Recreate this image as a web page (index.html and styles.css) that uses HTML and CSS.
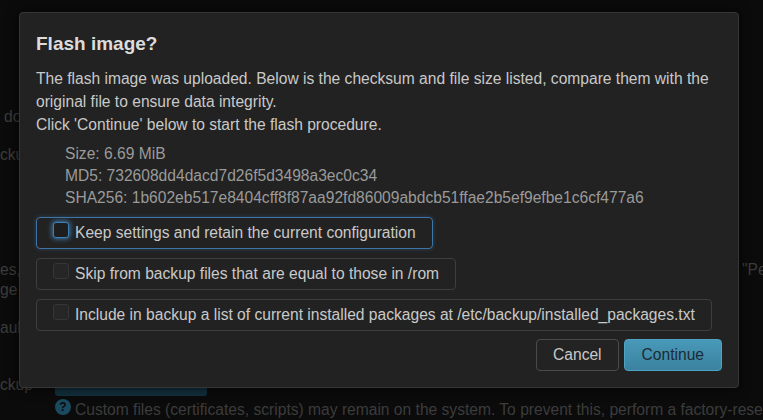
FILE: index.html
```html
<!DOCTYPE html>
<html>
<head>
<meta charset="utf-8">
<link rel="stylesheet" href="styles.css">
</head>
<body>
<div class="page">
  <div class="bg">
    <div class="bg-row r1"><span class="bg-label lead">do</span></div>
    <div class="bg-row r2"><span class="bg-label">ckup</span></div>
    <div class="bg-row r3 split"><span class="bg-label">es,</span><span class="bg-label">"Pe</span></div>
    <div class="bg-row r4"><span class="bg-label">ge</span></div>
    <div class="bg-row r5"><span class="bg-label">ault</span></div>
    <div class="bg-row r6"><span class="bg-label">ckup</span><span class="bg-btn"></span></div>
    <div class="bg-row r7"><span class="help-icon">?</span><span class="bg-label">Custom files (certificates, scripts) may remain on the system. To prevent this, perform a factory-reset</span></div>
  </div>

  <div class="modal">
    <h4 class="modal-title">Flash image?</h4>
    <p class="modal-text">The flash image was uploaded. Below is the checksum and file size listed, compare them with the original file to ensure data integrity.<br>Click 'Continue' below to start the flash procedure.</p>
    <ul class="sums">
      <li>Size: 6.69 MiB</li>
      <li>MD5: 732608dd4dacd7d26f5d3498a3ec0c34</li>
      <li>SHA256: 1b602eb517e8404cff8f87aa92fd86009abdcb51ffae2b5ef9efbe1c6cf477a6</li>
    </ul>
    <label class="opt focused"><span class="cb"></span><span>Keep settings and retain the current configuration</span></label>
    <label class="opt"><span class="cb"></span><span>Skip from backup files that are equal to those in /rom</span></label>
    <label class="opt"><span class="cb"></span><span>Include in backup a list of current installed packages at /etc/backup/installed_packages.txt</span></label>
    <div class="actions">
      <button class="btn">Cancel</button>
      <button class="btn primary">Continue</button>
    </div>
  </div>
</div>
</body>
</html>
```

FILE: styles.css
```css
html, body {
  margin: 0;
  padding: 0;
  background: #0b0b0b;
}
body {
  font-family: "Liberation Sans", Arial, sans-serif;
  font-size: 15.6px;
}
.page {
  position: relative;
  width: 763px;
  height: 420px;
  overflow: hidden;
}
.bg {
  padding-top: 107px;
  color: #3c3c3c;
  white-space: nowrap;
}
.bg-row {
  display: flex;
  height: 20px;
  line-height: 20px;
}
.bg-label { display: block; }
.lead { padding-left: 4px; }
.r2 { margin-top: 18px; }
.r3 { margin-top: 95px; }
.split { display: grid; grid-template-columns: 742px auto; }
.r5 { margin-top: 18px; }
.r6 {
  margin-top: 28px;
  height: 30px;
  display: grid;
  grid-template-columns: 55px 152px;
}
.r6 .bg-label { margin-top: 9px; }
.bg-btn {
  display: block;
  height: 30px;
  background: #12303d;
  border-radius: 3px;
}
.r7 {
  margin-top: 2px;
  padding-left: 55px;
  gap: 4px;
  align-items: flex-start;
}
.help-icon {
  display: block;
  flex: none;
  width: 16px;
  height: 16px;
  margin-top: 1px;
  border-radius: 50%;
  background: #1a4a60;
  color: #0b0b0b;
  font-weight: bold;
  font-size: 12px;
  line-height: 16px;
  text-align: center;
}
.r7 .bg-label { margin-top: 2px; }

.modal {
  position: absolute;
  left: 19px;
  top: 12px;
  width: 720px;
  box-sizing: border-box;
  padding: 16px;
  background: #222222;
  border: 1px solid #363636;
  border-radius: 4px;
  box-shadow: 0 0 12px rgba(0, 0, 0, 0.7);
  color: #c9c9c9;
}
.modal-title {
  margin: 0 0 8px;
  font-size: 19px;
  line-height: 30px;
  font-weight: bold;
  color: #dcdcdc;
}
.modal-text {
  margin: 0;
  line-height: 23px;
}
.sums {
  list-style: none;
  margin: 7px 0 0;
  padding: 0 0 0 29px;
  line-height: 22px;
  color: #9a9a9a;
}
.opt {
  display: flex;
  width: fit-content;
  align-items: flex-start;
  gap: 6px;
  margin-top: 8px;
  padding: 4px 16px;
  line-height: 22px;
  border: 1px solid #3e3e3e;
  border-radius: 4px;
  color: #c9c9c9;
}
.opt + .opt { margin-top: 9px; }
.cb {
  display: block;
  flex: none;
  width: 16px;
  height: 16px;
  box-sizing: border-box;
  border: 1px solid #363636;
  border-radius: 3px;
  background: #262626;
}
.focused {
  border-color: #3f75a4;
  box-shadow: 0 0 4px rgba(60, 130, 200, 0.35);
}
.focused .cb {
  border-color: #3c80b8;
  background: #1e1e1e;
  box-shadow: 0 0 5px 1px rgba(80, 160, 230, 0.7);
}
.actions {
  display: flex;
  justify-content: flex-end;
  gap: 5px;
  margin-top: 8px;
}
.btn {
  height: 32px;
  padding: 0 16px;
  font-family: inherit;
  font-size: 15.6px;
  border-radius: 4px;
  border: 1px solid #4a4a4a;
  background: #232323;
  color: #c9c9c9;
}
.primary {
  padding: 0 17px;
  border-color: #4ea3c4;
  background: linear-gradient(#4899b8, #3b82a0);
  color: #1c2b33;
}
```
